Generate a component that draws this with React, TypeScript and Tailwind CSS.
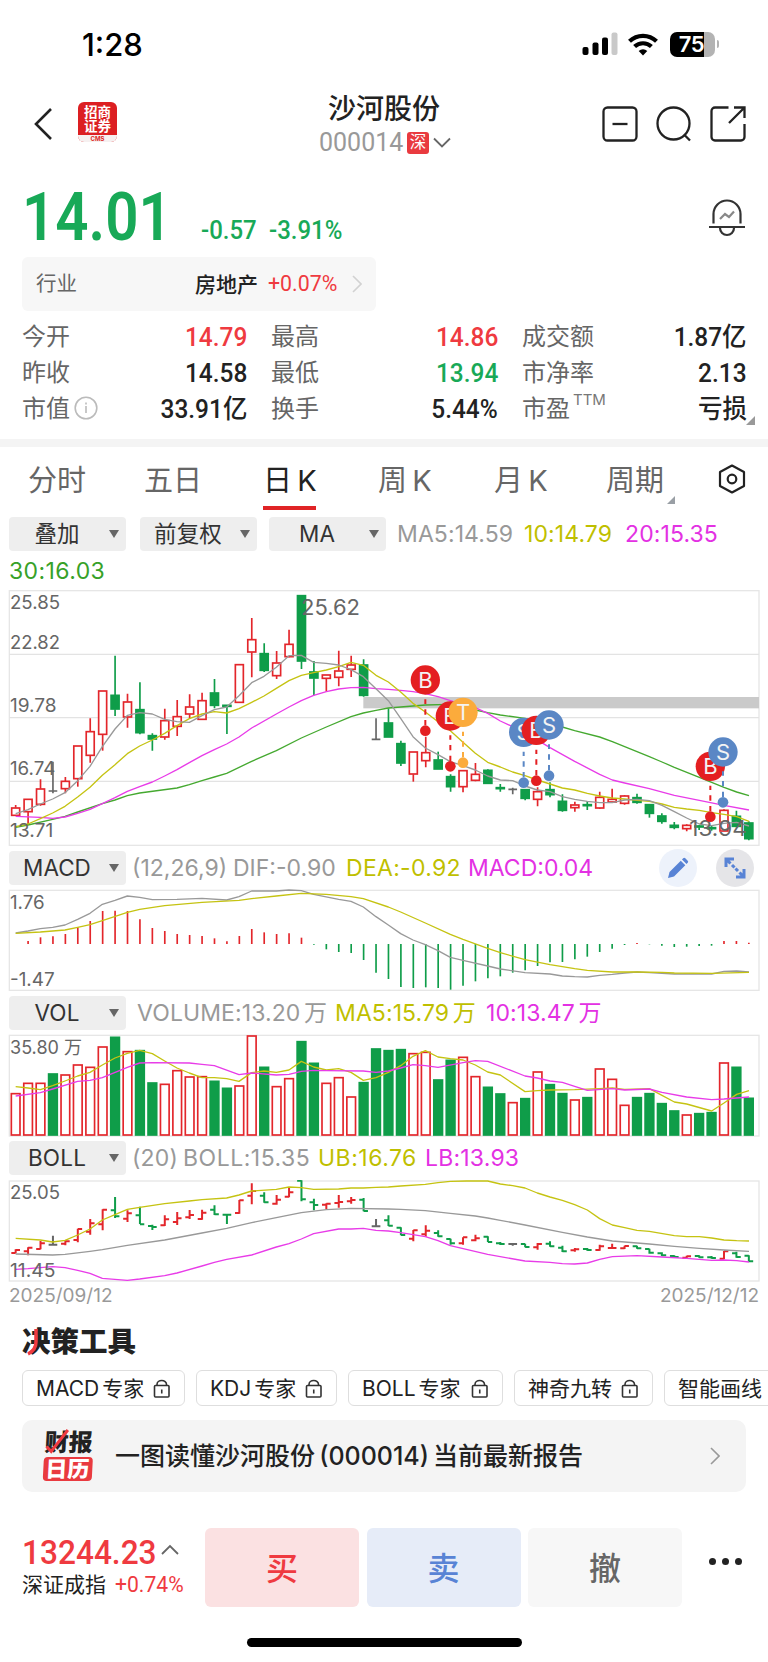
import type { ReactNode } from "react";

const RED = "#e3262b";
const GREEN = "#0f9d49";
const GRAY = "#666666";

// Charts are drawn at three units per pixel
const X0 = 47;
const STEP = 37.28;
const colors: Record<string, string> = { r: RED, g: GREEN, k: GRAY };

type Row = [string, number, number, number, number];

// kind, high, body top, body bottom, low
const candles: Row[] = [
  ["r", 675, 683, 707, 707], ["r", 657, 657, 696, 735], ["r", 598, 626, 674, 677], ["k", 545, 633, 633, 640],
  ["r", 591, 603, 627, 640], ["r", 497, 497, 597, 620], ["r", 415, 454, 527, 548], ["r", 332, 332, 464, 512],
  ["g", 227, 345, 388, 408], ["r", 341, 365, 412, 443], ["g", 307, 388, 459, 463], ["g", 460, 466, 478, 512],
  ["r", 386, 421, 472, 479], ["r", 360, 409, 440, 468], ["r", 343, 380, 403, 415], ["r", 338, 361, 419, 419],
  ["g", 297, 338, 377, 385], ["g", 375, 375, 380, 462], ["r", 253, 253, 368, 368], ["r", 114, 178, 217, 292],
  ["g", 190, 220, 272, 276], ["r", 213, 248, 288, 297], ["r", 149, 192, 231, 232], ["g", 46, 46, 244, 267],
  ["g", 243, 275, 295, 346], ["r", 284, 284, 296, 335], ["r", 212, 272, 293, 319], ["r", 227, 254, 269, 291],
  ["g", 238, 254, 347, 350], ["k", 415, 478, 478, 478], ["g", 385, 428, 472, 472], ["g", 482, 490, 550, 558],
  ["r", 515, 515, 583, 605], ["r", 470, 517, 543, 562], ["g", 515, 539, 568, 568], ["g", 583, 589, 621, 635],
  ["r", 571, 571, 621, 637], ["r", 549, 582, 602, 604], ["g", 568, 570, 611, 611], ["g", 612, 622, 627, 635],
  ["k", 623, 628, 628, 643], ["g", 628, 628, 656, 661], ["r", 622, 634, 659, 679], ["g", 607, 628, 645, 652],
  ["g", 643, 663, 692, 695], ["r", 665, 674, 684, 695], ["g", 663, 673, 678, 690], ["r", 635, 651, 685, 687],
  ["r", 626, 657, 667, 669], ["r", 645, 647, 671, 674], ["g", 641, 652, 668, 671], ["g", 673, 673, 701, 713],
  ["g", 700, 707, 725, 731], ["g", 726, 735, 743, 748], ["r", 733, 735, 747, 754], ["g", 735, 737, 742, 750],
  ["g", 735, 742, 747, 752], ["r", 688, 690, 754, 754], ["g", 692, 708, 740, 742], ["g", 724, 728, 777, 781],
];

const macd = [
  312, 303, 292, 289, 282, 262, 243, 213, 212, 213, 238, 264, 273, 282, 285, 288, 295, 304, 288, 267,
  277, 282, 280, 293, 314, 328, 336, 339, 360, 398, 417, 441, 444, 442, 444, 449, 437, 424, 415, 409,
  398, 391, 378, 367, 366, 358, 350, 336, 326, 315, 309, 313, 317, 321, 320, 318, 317, 303, 303, 308,
];

const volume = [
  760, 729, 729, 701, 704, 674, 681, 620, 591, 634, 631, 728, 732, 691, 710, 709, 723, 744, 737, 587,
  681, 739, 715, 604, 669, 729, 712, 770, 727, 626, 631, 628, 640, 636, 719, 660, 651, 709, 741, 761,
  787, 775, 695, 733, 760, 779, 772, 686, 717, 795, 772, 760, 790, 812, 824, 820, 817, 668, 681, 774,
];

// kind, high, low, open, close
const ohlc: Row[] = [
  ["r", 328, 340, 339, 330], ["r", 322, 346, 334, 323], ["r", 303, 328, 327, 310], ["k", 287, 314, 314, 314],
  ["r", 300, 316, 311, 304], ["r", 266, 307, 300, 267], ["r", 237, 284, 275, 250], ["r", 208, 271, 253, 209],
  ["g", 171, 234, 211, 229], ["r", 211, 246, 236, 220], ["g", 200, 252, 226, 253], ["g", 254, 270, 258, 261],
  ["r", 226, 258, 256, 238], ["r", 216, 255, 246, 235], ["r", 210, 237, 232, 225], ["r", 209, 239, 237, 218],
  ["g", 196, 225, 209, 223], ["g", 223, 252, 224, 224], ["r", 180, 221, 219, 181], ["r", 130, 193, 167, 153],
  ["g", 157, 188, 167, 187], ["r", 165, 194, 191, 179], ["r", 142, 172, 170, 157], ["g", 121, 184, 122, 178],
  ["g", 176, 211, 187, 195], ["r", 190, 207, 194, 191], ["r", 165, 203, 189, 186], ["r", 171, 191, 184, 180],
  ["g", 174, 214, 179, 213], ["k", 237, 260, 259, 259], ["g", 226, 258, 241, 257], ["g", 262, 286, 263, 285],
  ["r", 270, 304, 296, 271], ["r", 256, 290, 283, 272], ["g", 271, 290, 279, 289], ["g", 296, 314, 297, 310],
  ["r", 292, 314, 310, 292], ["r", 284, 304, 301, 295], ["g", 289, 306, 290, 306], ["g", 306, 315, 310, 312],
  ["k", 311, 317, 312, 312], ["g", 311, 322, 312, 321], ["r", 309, 329, 322, 312], ["g", 304, 320, 311, 319],
  ["g", 317, 336, 323, 334], ["r", 324, 335, 331, 328], ["g", 324, 332, 327, 330], ["r", 314, 332, 330, 319],
  ["r", 311, 326, 324, 324], ["r", 317, 327, 325, 318], ["g", 317, 326, 319, 325], ["g", 326, 341, 327, 338],
  ["g", 337, 348, 340, 346], ["g", 346, 353, 348, 351], ["r", 347, 354, 353, 349], ["g", 346, 353, 348, 352],
  ["g", 348, 356, 352, 354], ["r", 333, 358, 356, 334], ["g", 335, 353, 340, 351], ["g", 346, 366, 347, 364],
];

const lines = {
  ma5: "47,701 84,689 121,672 158,657 195,638 233,602 270,559 307,500 345,447 382,406 419,398 457,402 494,418 531,425 568,427 606,407 643,389 680,381 717,347 755,308 792,289 829,262 867,227 904,226 941,247 979,250 1016,255 1053,269 1090,290 1128,326 1165,362 1202,415 1239,470 1276,504 1314,524 1351,545 1389,557 1426,570 1463,588 1501,600 1538,602 1575,618 1612,630 1650,635 1687,650 1724,658 1762,664 1799,668 1837,668 1874,660 1911,658 1948,662 1986,676 2023,695 2060,714 2098,732 2135,737 2172,730 2210,727 2247,738",
  ma10: "47,740 84,732 121,716 158,699 195,679 233,651 270,622 307,586 345,554 382,521 419,498 457,480 494,460 531,437 568,416 606,402 643,395 680,399 717,386 755,367 792,348 829,325 867,302 904,286 941,278 979,270 1016,260 1053,247 1090,256 1128,286 1165,306 1202,336 1239,370 1276,396 1314,425 1351,452 1389,487 1426,520 1463,547 1501,561 1538,576 1575,587 1612,600 1650,612 1687,624 1724,630 1762,640 1799,648 1837,654 1874,657 1911,661 1948,664 1986,672 2023,682 2060,687 2098,691 2135,698 2172,703 2210,710 2247,724",
  ma20: "47,709 121,712 158,715 195,711 233,700 270,688 307,671 345,653 382,634 419,620 457,606 494,588 531,569 568,548 606,527 643,509 680,492 717,471 755,444 829,402 867,381 904,362 941,346 979,335 1016,327 1053,323 1090,322 1128,326 1165,328 1202,331 1239,335 1276,341 1314,350 1351,362 1389,374 1426,383 1463,400 1501,423 1538,440 1575,462 1620,485 1650,503 1724,544 1799,583 1837,600 1874,609 1948,626 2023,646 2098,661 2172,676 2247,690",
  ma30: "47,742 84,735 158,718 195,709 233,696 307,671 345,660 382,647 419,639 531,624 568,614 606,602 643,591 680,580 755,544 829,512 904,474 979,441 1053,410 1090,399 1128,391 1165,384 1276,375 1351,373 1400,382 1426,390 1463,398 1501,405 1575,415 1650,430 1687,441 1724,452 1799,471 1837,485 1874,500 1948,530 1986,546 2023,562 2098,592 2172,622 2210,636 2247,647",
  dif: "47,279 84,273 121,266 158,262 195,255 233,238 270,220 307,193 345,181 382,168 419,172 457,179 531,178 606,175 680,180 717,170 755,153 829,153 867,150 904,152 941,163 1016,178 1053,184 1090,201 1128,230 1165,255 1202,281 1239,300 1276,314 1314,332 1351,352 1389,361 1463,378 1501,387 1575,398 1650,402 1687,408 1724,410 1762,411 1799,406 1837,403 1874,399 1911,396 1948,398 2023,402 2135,402 2172,394 2210,393 2247,396",
  dea: "47,280 121,276 195,270 233,262 270,254 307,242 382,217 419,208 494,197 606,187 717,181 755,176 829,168 904,160 979,163 1053,170 1090,176 1165,201 1202,216 1276,249 1351,283 1389,298 1463,325 1501,338 1575,359 1650,374 1724,386 1762,391 1837,396 1911,396 1986,397 2023,399 2135,400 2247,397",
  vol5: "47,740 84,744 121,749 158,737 195,723 233,708 270,697 307,675 345,654 382,640 419,631 457,641 494,663 531,684 568,699 606,713 643,713 680,716 717,724 755,698 792,693 829,697 867,690 904,664 941,681 979,690 1016,686 1053,697 1090,721 1128,713 1165,697 1202,677 1239,649 1276,632 1314,651 1351,656 1389,660 1426,675 1463,696 1501,705 1575,755 1612,752 1650,750 1724,749 1799,746 1837,744 1874,748 1948,746 1986,766 2023,786 2060,792 2135,813 2172,789 2210,763 2247,752",
  vol10: "47,768 121,758 158,747 233,724 270,721 307,713 382,682 419,669 457,668 568,669 606,673 643,677 717,704 755,699 829,705 867,703 904,694 941,691 979,692 1090,693 1128,697 1165,693 1202,684 1239,674 1276,677 1314,682 1389,668 1426,662 1463,664 1575,708 1612,714 1650,723 1687,727 1724,739 1762,751 1837,746 1874,750 1948,747 1986,757 2060,771 2135,779 2172,777 2247,771",
  ub: "47,295 121,300 158,306 195,301 233,285 270,267 307,240 345,224 382,208 419,202 494,191 568,183 606,179 680,174 717,165 755,153 829,148 867,141 904,143 941,148 1016,147 1053,144 1090,144 1128,142 1165,141 1202,138 1276,133 1314,128 1351,124 1400,123 1463,123 1501,132 1538,137 1575,144 1612,159 1650,171 1687,181 1724,194 1762,210 1799,236 1837,255 1874,263 1911,271 1948,274 2023,287 2060,290 2098,290 2135,294 2172,300 2210,302 2247,303",
  mid: "47,342 158,345 195,343 270,334 307,329 382,316 494,300 606,279 680,265 755,248 829,233 904,218 979,209 1053,205 1165,207 1202,208 1276,212 1351,220 1426,228 1463,234 1501,241 1575,255 1687,277 1762,291 1837,303 1948,312 2023,319 2098,325 2172,330 2247,334",
  lb: "47,388 84,386 158,380 195,383 233,391 270,400 307,415 382,421 419,417 494,407 531,399 606,378 643,367 680,358 755,345 829,321 867,311 904,297 941,281 1016,267 1053,267 1090,265 1128,271 1165,273 1202,278 1276,290 1314,302 1351,317 1463,343 1575,363 1650,367 1687,371 1724,372 1762,369 1799,358 1837,350 1911,347 1986,351 2060,355 2135,361 2172,360 2210,362 2247,366",
};

// letter, colour, x, badge y, dot y
const markers: [string, string, number, number, number][] = [
  ["B", "#e41f21", 1276, 300, 452],
  ["B", "#e41f21", 1351, 408, 559],
  ["T", "#fbab3c", 1389, 397, 548],
  ["S", "#5a87c5", 1571, 457, 608],
  ["B", "#e41f21", 1609, 451, 602],
  ["S", "#5a87c5", 1647, 435, 587],
  ["B", "#e41f21", 2131, 559, 710],
  ["S", "#5a87c5", 2169, 516, 667],
];

function Line({ points, color }: { points: string; color: string }) {
  return <polyline points={points} fill="none" stroke={color} strokeWidth="4" strokeLinejoin="round" />;
}

function Label({ x, y, w, size = 56, children }: { x: number; y: number; w: number; size?: number; children: ReactNode }) {
  return (
    <text
      x={x}
      y={y}
      textLength={w}
      lengthAdjust="spacingAndGlyphs"
      fontSize={size}
      fill={GRAY}
      className="font-['Inter','Noto_Sans_CJK_SC',sans-serif]"
    >
      {children}
    </text>
  );
}

function PriceChart() {
  return (
    <svg viewBox="0 30 2304 768" className="block h-[256px] w-[768px] shrink-0">
      <rect x="28" y="32" width="2249" height="764" fill="none" stroke="#e6e6e6" strokeWidth="4" />
      {[223, 413, 604].map((y) => (
        <path key={y} d={`M28 ${y}H2277`} stroke="#e3e3e3" strokeWidth="4" />
      ))}
      <rect x="1090" y="351" width="1187" height="34" fill="#cacaca" />
      {candles.map(([kind, high, top, bottom, low], i) => {
        const x = X0 + i * STEP;
        if (kind === "k") {
          return <path key={i} d={`M${x} ${high}V${low}M${x - 13} ${top}h26`} stroke={GRAY} strokeWidth="5" />;
        }
        return (
          <g key={i} stroke={colors[kind]} strokeWidth="5">
            <path d={`M${x} ${high}V${top}M${x} ${bottom}V${low}`} />
            <rect
              x={x - 12}
              y={top + 1}
              width="24"
              height={Math.max(bottom - top - 2, 1)}
              fill={kind === "g" ? GREEN : "white"}
            />
          </g>
        );
      })}
      <Line points={lines.ma30} color="#45a930" />
      <Line points={lines.ma20} color="#e83ce8" />
      <Line points={lines.ma10} color="#c5c312" />
      <Line points={lines.ma5} color="#999999" />
      <Label x={30} y={88} w={150}>25.85</Label>
      <Label x={30} y={207} w={150}>22.82</Label>
      <Label x={30} y={396} w={140}>19.78</Label>
      <Label x={30} y={585} w={136}>16.74</Label>
      <Label x={30} y={772} w={130}>13.71</Label>
      <Label x={903} y={104} w={177} size={64}>25.62</Label>
      <Label x={2068} y={767} w={172} size={64}>13.94</Label>
      {markers.map(([letter, color, x, y, dot], i) => (
        <g key={i}>
          <path d={`M${x} ${dot - 16}V${y + 58}`} stroke={color} strokeWidth="6" strokeDasharray="16 16" />
          <circle cx={x} cy={dot} r="16" fill={color} />
          <circle cx={x} cy={y} r="44" fill={color} />
          <text x={x} y={y + 24} textAnchor="middle" fontSize="66" fill="#f3f3f3" className="font-['Inter',sans-serif]">
            {letter}
          </text>
        </g>
      ))}
    </svg>
  );
}

function MacdChart() {
  return (
    <svg viewBox="0 147 2304 309" className="block h-[103px] w-[768px] shrink-0">
      <rect x="28" y="151" width="2249" height="300" fill="none" stroke="#e6e6e6" strokeWidth="4" />
      {macd.map((y, i) => (
        <path key={i} d={`M${X0 + i * STEP} 312V${y}`} stroke={y < 312 ? RED : GREEN} strokeWidth="5" />
      ))}
      <Line points={lines.dif} color="#999999" />
      <Line points={lines.dea} color="#c5c312" />
      <Label x={30} y={207} w={104}>1.76</Label>
      <Label x={30} y={439} w={134}>-1.47</Label>
    </svg>
  );
}

function VolumeChart() {
  return (
    <svg viewBox="0 582 2304 309" className="block h-[103px] w-[768px] shrink-0">
      <rect x="28" y="586" width="2249" height="302" fill="none" stroke="#e6e6e6" strokeWidth="4" />
      {volume.map((y, i) => {
        const red = candles[i][0] === "r";
        // a flat day still counts as a green or red volume bar
        const color = i === 40 || red ? RED : GREEN;
        return (
          <rect
            key={i}
            x={X0 + i * STEP - 13}
            y={y + 1}
            width="26"
            height={884 - y}
            fill={color === GREEN ? GREEN : "white"}
            stroke={color}
            strokeWidth="5"
          />
        );
      })}
      <Line points={lines.vol5} color="#c5c312" />
      <Line points={lines.vol10} color="#e83ce8" />
      <Label x={30} y={643} w={216}>35.80 万</Label>
    </svg>
  );
}

function BollChart() {
  return (
    <svg viewBox="0 120 2304 306" className="block h-[102px] w-[768px] shrink-0">
      <rect x="28" y="123" width="2249" height="300" fill="none" stroke="#e6e6e6" strokeWidth="4" />
      {ohlc.map(([kind, high, low, open, close], i) => {
        const x = X0 + i * STEP;
        return (
          <path
            key={i}
            d={`M${x} ${high}V${low}M${x - 13} ${open}H${x}M${x} ${close}h13`}
            stroke={colors[kind]}
            strokeWidth="6"
          />
        );
      })}
      <Line points={lines.mid} color="#999999" />
      <Line points={lines.ub} color="#c5c312" />
      <Line points={lines.lb} color="#e83ce8" />
      <Label x={30} y={178} w={150}>25.05</Label>
      <Label x={30} y={410} w={136}>11.45</Label>
    </svg>
  );
}

function Dropdown({ label }: { label: string }) {
  return (
    <div className="flex h-[34px] w-[117px] shrink-0 items-center rounded-[4px] bg-[#eeeeee] pr-[7px] text-[22.5px] text-[#333]">
      <span className="flex-1 pr-[4px] text-center whitespace-nowrap">{label}</span>
      <span className="h-0 w-0 border-x-[5.5px] border-t-8 border-x-transparent border-t-[#666]" />
    </div>
  );
}

function Stat({ label, value, color = "text-[#222]", extra }: { label: string; value: string; color?: string; extra?: ReactNode }) {
  return (
    <div className="flex h-9 items-center">
      <span className="pt-px text-2xl text-[#666]">{label}</span>
      {extra}
      <span className={`ml-auto origin-right scale-x-[0.94] pt-px font-['Roboto','Noto_Sans_CJK_SC',sans-serif] text-[26px] font-medium whitespace-nowrap ${color}`}>
        {value}
      </span>
    </div>
  );
}

function LockIcon() {
  return (
    <svg viewBox="0 0 18 19" className="h-[19px] w-[18px] fill-none stroke-[#333] stroke-[1.6]">
      <rect x="1.5" y="6.5" width="14.5" height="11.5" rx="1" />
      <path d="M4 6.500V5.500a4.750 4 0 0 1 9.500 0V6.500M8.750 10.500v4" />
    </svg>
  );
}

function Chip({ label, width, lock = true }: { label: string; width: string; lock?: boolean }) {
  return (
    <div className={`flex h-9 shrink-0 items-center justify-between rounded-[6px] border-[1.5px] border-[#dedede] px-[13px] text-[21px] [word-spacing:-3px] whitespace-nowrap text-[#222] ${width}`}>
      {label}
      {lock && <LockIcon />}
    </div>
  );
}

export default function App() {
  return (
    <div className="flex h-[1662px] w-[768px] flex-col overflow-hidden bg-white font-['Inter','Noto_Sans_CJK_SC',sans-serif] leading-none">
      {/* Status bar */}
      <div className="flex h-[88px] shrink-0 items-center pr-[49px] pl-[82px]">
        <span className="text-[31px] font-medium text-black">1:28</span>
        <svg viewBox="0 0 36 24" className="mr-[10px] ml-auto h-6 w-9">
          <rect x="0.5" y="15" width="6" height="8" rx="2" />
          <rect x="10.500" y="10.500" width="6" height="12.500" rx="2" />
          <rect x="20" y="5.500" width="6" height="17.500" rx="2" />
          <rect x="29.500" y="0.500" width="6" height="22.500" rx="2" fill="#c9c9c9" />
        </svg>
        <svg viewBox="0 0 30 23" className="mr-3 h-[23px] w-[30px] fill-none stroke-black stroke-[4.2]">
          <path d="M1.500 8.300a19.500 19.500 0 0 1 27 0" />
          <path d="M6.600 13.600a12.200 12.200 0 0 1 16.800 0" />
          <path d="M15 22.500l-4.300-4.600a6.200 6.200 0 0 1 8.600 0z" className="fill-black stroke-none" />
        </svg>
        <div className="flex items-center">
          <div className="flex h-[25px] w-[45px] items-center justify-center overflow-hidden rounded-[7px] bg-[linear-gradient(90deg,#000_75%,#b3b3b3_75%)] pr-px text-[22px] font-semibold tracking-[-0.5px] text-white">
            75
          </div>
          <div className="ml-[2px] h-2 w-[2.500px] rounded-r-full bg-[#b3b3b3]" />
        </div>
      </div>

      {/* Header */}
      <header className="flex h-[86px] shrink-0 items-start pr-[22px] pl-[34px]">
        <svg viewBox="0 0 18 34" className="mt-[19px] h-[34px] w-[18px] fill-none stroke-[#222] stroke-[2.6]">
          <path d="M17 2L2 17l15 15" />
        </svg>
        <div className="mt-[14px] ml-[26px] flex h-10 w-[39px] flex-col overflow-hidden rounded-[6px] bg-[#dc1f22] text-center font-semibold text-white">
          <span className="mt-[2px] font-['Noto_Sans_CJK_SC',sans-serif] text-[13.500px] leading-[15px]">招商</span>
          <span className="-mt-px font-['Noto_Sans_CJK_SC',sans-serif] text-[13.500px] leading-[15px]">证券</span>
          <span className="mt-auto h-[7px] bg-[#f6f0f0] text-[6px] leading-[7px] font-bold text-[#dc1f22]">CMS</span>
        </div>
        <div className="ml-[179px] flex w-[176px] flex-col items-center">
          <span className="mt-[7px] text-[28px] font-medium text-[#222]">沙河股份</span>
          <div className="mt-[7px] flex items-center pl-[2px]">
            <span className="w-[86px] font-['Roboto',sans-serif] text-[25px] text-[#999]">000014</span>
            <span className="ml-[2px] flex h-[22px] w-[22px] items-center justify-center rounded-[3px] bg-[#e93a3f] text-[16.500px] text-white">
              深
            </span>
            <svg viewBox="0 0 18 12" className="ml-[4px] h-3 w-[18px] fill-none stroke-[#666] stroke-[1.8]">
              <path d="M1 1.500l8 8 8-8" />
            </svg>
          </div>
        </div>
        <div className="mt-[18px] ml-auto flex gap-[18px]">
          <svg viewBox="0 0 36 36" className="h-9 w-9 fill-none stroke-[#222] stroke-[2.300]">
            <rect x="1.500" y="1.500" width="33" height="33" rx="4" />
            <path d="M10.500 18h15" />
          </svg>
          <svg viewBox="0 0 36 36" className="h-9 w-9 fill-none stroke-[#222] stroke-[2.300]">
            <circle cx="17.500" cy="17.500" r="16" />
            <path d="M28 28.500l6 6" />
          </svg>
          <svg viewBox="0 0 36 36" className="h-9 w-9 fill-none stroke-[#222] stroke-[2.300]">
            <path d="M18.500 1.500H5A3.500 3.500 0 0 0 1.500 5v26A3.500 3.500 0 0 0 5 34.500h26a3.500 3.500 0 0 0 3.500-3.500V18" />
            <path d="M24 1.500h10.500V12M34 2L19 17" />
          </svg>
        </div>
      </header>

      {/* Price */}
      <div className="flex h-[83px] shrink-0 items-start pr-[23px] pl-[22px] text-[#18a957]">
        <span className="mt-[10px] w-[179px] origin-left scale-x-[0.87] font-['Roboto',sans-serif] text-[67px] font-semibold">14.01</span>
        <span className="mt-[44px] w-[68px] origin-left scale-x-[0.96] font-['Roboto',sans-serif] text-[25px] font-medium">-0.57</span>
        <span className="mt-[44px] origin-left scale-x-[0.96] font-['Roboto',sans-serif] text-[25px] font-medium">-3.91%</span>
        <svg viewBox="0 0 36 38" className="mt-[25px] ml-auto h-[38px] w-9 fill-none stroke-[#333] stroke-[2.200]">
          <path d="M4.500 24.500V15a13.500 13.500 0 0 1 27 0v9.500M0 28h36M11 29a7 7 0 0 0 14 0" />
          <path d="M11 20l5-5 4 3 5-5.500" stroke="#888" />
        </svg>
      </div>

      <div className="ml-[22px] flex h-[54px] w-[354px] shrink-0 items-center rounded-[6px] bg-[#f7f7f7] pr-[14px] pl-[14px]">
        <span className="pt-px text-[20.500px] text-[#666]">行业</span>
        <span className="ml-auto text-[21px] font-medium text-[#222]">房地产</span>
        <span className="ml-[10px] w-[74px] origin-left scale-x-[0.97] font-['Roboto',sans-serif] text-[22px] text-[#ef3a40]">+0.07%</span>
        <svg viewBox="0 0 10 18" className="ml-[10px] h-[18px] w-[10px] fill-none stroke-[#d2d2d2] stroke-[1.600]">
          <path d="M1 1l8 8-8 8" />
        </svg>
      </div>

      {/* Stats */}
      <div className="relative mt-[7px] grid h-[121px] shrink-0 grid-cols-[225px_227px_225px] content-start gap-x-6 pl-[22px]">
        <Stat label="今开" value="14.79" color="text-[#ef3a40]" />
        <Stat label="最高" value="14.86" color="text-[#ef3a40]" />
        <Stat label="成交额" value="1.87亿" />
        <Stat label="昨收" value="14.58" />
        <Stat label="最低" value="13.94" color="text-[#18a957]" />
        <Stat label="市净率" value="2.13" />
        <Stat
          label="市值"
          value="33.91亿"
          extra={
            <svg viewBox="0 0 24 24" className="ml-1 h-6 w-6 fill-none stroke-[#bbb] stroke-[1.600]">
              <circle cx="12" cy="12" r="10.800" />
              <path d="M12 10v7M12 6.500v2" />
            </svg>
          }
        />
        <Stat label="换手" value="5.44%" />
        <Stat
          label="市盈"
          value="亏损"
          extra={<span className="mb-[17px] ml-[3px] text-[15px] text-[#777]">TTM</span>}
        />
        <span className="absolute top-[98px] left-[746px] h-0 w-0 border-b-[9px] border-l-[9px] border-b-[#999] border-l-transparent" />
      </div>
      <div className="h-2 shrink-0 bg-[#f4f4f4]" />

      {/* Period tabs */}
      <nav className="flex h-[70px] shrink-0 items-start pl-[28px] text-[29px] [word-spacing:-3px] text-[#666]">
        <span className="mt-[19px] w-[116px]">分时</span>
        <span className="mt-[19px] w-[119px]">五日</span>
        <div className="relative mr-[60px] h-[63px] w-[53px] border-b-4 border-[#e02426]">
          <span className="mt-[19px] block text-center whitespace-nowrap text-[#222]">日 K</span>
        </div>
        <span className="mt-[19px] w-[118px] pl-[2px]">周 K</span>
        <span className="mt-[19px] w-[112px]">月 K</span>
        <span className="mt-[19px] w-[61px]">周期</span>
        <span className="mt-[49px] h-0 w-0 border-b-8 border-l-8 border-b-[#999fa5] border-l-transparent" />
        <svg viewBox="0 0 28 30" className="mt-[17px] ml-[43px] h-[30px] w-7 fill-none stroke-[#222] stroke-[2.200]">
          <path d="M14 1.500l12 6.500v14l-12 6.500L2 22V8z" strokeLinejoin="round" />
          <circle cx="14" cy="15" r="4.300" />
        </svg>
      </nav>

      {/* Overlay indicators */}
      <div className="flex h-[34px] shrink-0 items-center pl-[9px] text-[23px] tracking-[0.1px] whitespace-nowrap">
        <Dropdown label="叠加" />
        <div className="ml-[14px]"><Dropdown label="前复权" /></div>
        <div className="ml-[12px]"><Dropdown label="MA" /></div>
        <span className="ml-[11px] w-[127px] text-[#999]">MA5:14.59</span>
        <span className="w-[101px] text-[#bfbf00]">10:14.79</span>
        <span className="text-[#e331e3]">20:15.35</span>
      </div>
      <div className="flex h-[39px] shrink-0 items-center pt-px pl-[9px] text-[23px] tracking-[0.4px] text-[#37a128]">30:16.03</div>

      <PriceChart />
      <div className="mt-[5px] mb-1 flex h-[34px] shrink-0 items-center pl-[9px] text-[23px] whitespace-nowrap">
        <Dropdown label="MACD" />
        <span className="ml-[6px] w-[101px] text-[#999]">(12,26,9)</span>
        <span className="w-[113px] text-[#999]">DIF:-0.90</span>
        <span className="w-[122px] tracking-[0.3px] text-[#bfbf00]">DEA:-0.92</span>
        <span className="w-[191px] text-[#e331e3]">MACD:0.04</span>
        <div className="-my-1 flex h-[38px] w-[38px] items-center justify-center rounded-full bg-[#edf2fb]">
          <svg viewBox="0 0 22 22" className="h-[22px] w-[22px] fill-[#5883d5]">
            <path d="M1 21l1.500-6L13.800 3.700l4.500 4.500L7 19.500zM15 2.500l1.200-1.200a1.500 1.500 0 0 1 2.100 0l2.400 2.400a1.500 1.500 0 0 1 0 2.100L19.500 7z" />
          </svg>
        </div>
        <div className="-my-1 ml-[19px] flex h-[38px] w-[38px] items-center justify-center rounded-full bg-[#e5e5e8]">
          <svg viewBox="0 0 22 22" className="h-[22px] w-[22px] fill-none stroke-[#5883d5] stroke-[3]">
            <path d="M2 10V2h8M2 2l4.500 4.500M8 8l2.500 2.500M20 12v8h-8M20 20l-4.500-4.500M14 14l-2.500-2.500" />
          </svg>
        </div>
      </div>
      <MacdChart />
      <div className="mt-1 mb-1 flex h-[34px] shrink-0 items-center pl-[9px] text-[23px] tracking-[0.1px] [word-spacing:-3px] whitespace-nowrap">
        <Dropdown label="VOL" />
        <span className="ml-[11px] w-[198px] text-[#999]">VOLUME:13.20 万</span>
        <span className="w-[151px] text-[#bfbf00]">MA5:15.79 万</span>
        <span className="text-[#e331e3]">10:13.47 万</span>
      </div>
      <VolumeChart />
      <div className="mt-1 mb-[5px] flex h-[34px] shrink-0 items-center pl-[9px] text-[23px] tracking-[0.2px] whitespace-nowrap">
        <Dropdown label="BOLL" />
        <span className="ml-[6px] w-[51px] text-[#999]">(20)</span>
        <span className="w-[135px] tracking-[0.5px] text-[#999]">BOLL:15.35</span>
        <span className="w-[107px] tracking-[0.5px] text-[#bfbf00]">UB:16.76</span>
        <span className="text-[#e331e3]">LB:13.93</span>
      </div>
      <BollChart />
      <div className="flex h-[27px] shrink-0 items-center justify-between pr-[9px] pl-[9px] text-[19px] text-[#999]">
        <span>2025/09/12</span>
        <span>2025/12/12</span>
      </div>

      {/* Tools */}
      <div className="flex h-[61px] shrink-0 items-center pt-[5px] pl-[22px] text-[28.500px] font-black text-[#222]">
        <span className="relative">
          决策工具
          <svg viewBox="0 0 12 28" className="absolute top-0 left-[5px] h-7 w-3 fill-none stroke-[#ef3a40] stroke-[3.500]">
            <path d="M9 1v13c0 5-2 9-8 12" />
          </svg>
        </span>
      </div>
      <div className="flex h-9 shrink-0 gap-[11px] pl-[22px]">
        <Chip label="MACD 专家" width="w-[163px]" />
        <Chip label="KDJ 专家" width="w-[141px]" />
        <Chip label="BOLL 专家" width="w-[155px]" />
        <Chip label="神奇九转" width="w-[139px]" />
        <Chip label="智能画线" width="w-[139px]" lock={false} />
      </div>

      <div className="mx-[22px] mt-[14px] flex h-[72px] shrink-0 items-center rounded-[10px] bg-[#f4f4f4] pr-[26px] pl-[21px]">
        <div className="flex w-[50px] -skew-x-3 flex-col items-center font-black">
          <span className="relative text-[24px] text-[#222]">
            财报
            <svg viewBox="0 0 24 26" className="absolute -top-[2px] left-0 h-[26px] w-6 fill-none stroke-[#ef3a40] stroke-[3]">
              <path d="M2 17.500l5 5L22.500 1" />
            </svg>
          </span>
          <span className="mt-[2px] flex h-[24px] w-[49px] items-center justify-center rounded-[4px] bg-[#e93a3f] text-[22px] text-white">
            日历
          </span>
        </div>
        <span className="ml-[22px] text-[25px] font-medium [word-spacing:-2.500px] whitespace-nowrap text-[#222]">一图读懂沙河股份 (000014) 当前最新报告</span>
        <svg viewBox="0 0 10 18" className="ml-auto h-[18px] w-[10px] fill-none stroke-[#999] stroke-[1.600]">
          <path d="M1 1l8 8-8 8" />
        </svg>
      </div>

      {/* Trade bar */}
      <footer className="mt-9 flex h-[79px] shrink-0 items-center pl-[22px]">
        <div className="w-[183px]">
          <div className="-mt-[5px] flex items-center">
            <span className="w-[139px] origin-left scale-x-[0.93] font-['Roboto',sans-serif] text-[34px] font-medium text-[#ef3a40]">13244.23</span>
            <svg viewBox="0 0 18 12" className="-mt-1 h-3 w-[18px] fill-none stroke-[#666] stroke-[1.800]">
              <path d="M1 10l8-8 8 8" />
            </svg>
          </div>
          <div className="mt-[5px] flex items-center text-[21px] whitespace-nowrap text-[#222]">
            深证成指
            <span className="ml-[9px] origin-left scale-x-[0.96] font-['Roboto',sans-serif] text-[22px] text-[#ef3a40]">+0.74%</span>
          </div>
        </div>
        <div className="flex gap-[7.500px] text-[32px] font-medium">
          <button className="h-[79px] w-[154px] rounded-[6px] bg-[#fbe1e2] pt-[2px] text-[#ef3a40]">买</button>
          <button className="h-[79px] w-[154px] rounded-[6px] bg-[#e6ecf8] pt-[2px] text-[#5883d5]">卖</button>
          <button className="h-[79px] w-[154px] rounded-[6px] bg-[#f7f7f7] pt-[2px] text-[#666]">撤</button>
        </div>
        <div className="mb-[13px] ml-[27px] flex gap-[6px]">
          <span className="h-[7px] w-[7px] rounded-full bg-[#222]" />
          <span className="h-[7px] w-[7px] rounded-full bg-[#222]" />
          <span className="h-[7px] w-[7px] rounded-full bg-[#222]" />
        </div>
      </footer>
      <div className="mt-[31px] ml-[247px] h-[9px] w-[275px] shrink-0 rounded-full bg-black" />
    </div>
  );
}
